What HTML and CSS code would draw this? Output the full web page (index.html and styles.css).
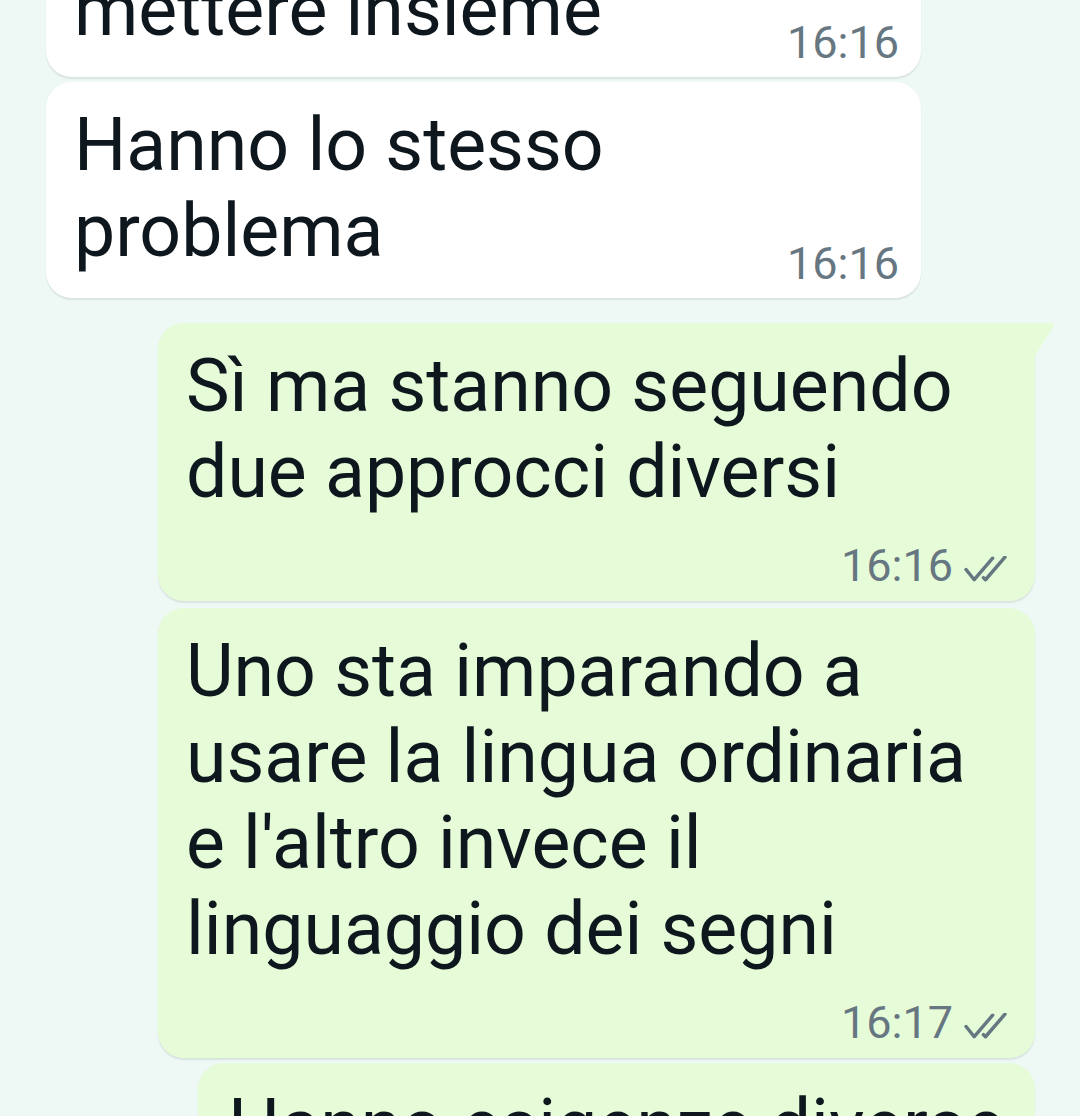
FILE: index.html
```html
<!DOCTYPE html>
<html lang="it">
<head>
<meta charset="utf-8">
<title>Chat</title>
<link rel="stylesheet" href="styles.css">
</head>
<body>
<div class="chat">
  <div class="bubble in b-first">
    <div class="text">mettere insieme</div>
    <div class="meta tight"><span class="time">16:16</span></div>
  </div>
  <div class="bubble in">
    <div class="text">Hanno lo stesso<br>problema</div>
    <div class="meta tight"><span class="time">16:16</span></div>
  </div>
  <div class="bubble out tail group-start">
    <div class="text">Sì ma stanno seguendo<br>due approcci diversi</div>
    <div class="meta"><span class="time">16:16</span>
      <svg class="ticks" viewBox="0 0 42 26" width="43" height="27"><path d="M2 13 L10 23 L28 2"/><path d="M19 21 L21 23 L40 1"/></svg>
    </div>
  </div>
  <div class="bubble out">
    <div class="text">Uno sta imparando a<br>usare la lingua ordinaria<br>e l'altro invece il<br>linguaggio dei segni</div>
    <div class="meta"><span class="time">16:17</span>
      <svg class="ticks" viewBox="0 0 42 26" width="43" height="27"><path d="M2 13 L10 23 L28 2"/><path d="M19 21 L21 23 L40 1"/></svg>
    </div>
  </div>
  <div class="bubble out narrow">
    <div class="text">Hanno esigenze diverse</div>
  </div>
</div>
</body>
</html>
```

FILE: styles.css
```css
html, body {
  margin: 0;
  padding: 0;
  background: #eef9f5;
  height: 1116px;
  overflow: hidden;
}
body {
  font-family: Roboto, "Noto Sans", sans-serif;
  color: #0e171d;
}
.chat {
  display: flex;
  flex-direction: column;
  gap: 7px;
  margin-top: -53px;
}
.bubble {
  position: relative;
  box-sizing: border-box;
  padding: 20px 22px 9px 28px;
  border-radius: 26px;
  box-shadow: 0 1.5px 1.5px rgba(0, 0, 0, 0.09);
}
.in {
  background: #ffffff;
  margin-left: 46px;
  width: 875px;
}
.b-first {
  margin-bottom: -2px;
}
.out {
  background: #e6fcd8;
  margin-left: 158px;
  width: 877px;
  padding-left: 28px;
  padding-right: 28px;
  padding-bottom: 10px;
}
.group-start {
  margin-top: 18px;
}
.tail {
  border-top-right-radius: 0;
}
.tail::after {
  content: "";
  position: absolute;
  top: 0;
  right: -19px;
  width: 20px;
  height: 34px;
  background: #e6fcd8;
  clip-path: polygon(0 0, 88% 0, 100% 4%, 95% 14%, 0 100%);
}
.narrow {
  margin-left: 198px;
  width: 837px;
  padding-left: 30px;
  margin-top: -2px;
}
.text {
  font-size: 73.4px;
  line-height: 86px;
  white-space: nowrap;
}
.meta {
  display: flex;
  justify-content: flex-end;
  align-items: center;
  gap: 11px;
  height: 50px;
  margin-top: 26px;
}
.meta.tight {
  margin-top: -35px;
}
.time {
  font-size: 45px;
  line-height: 50px;
  color: #667781;
}
.ticks {
  fill: none;
  stroke: #667781;
  stroke-width: 3.4;
  stroke-linecap: round;
  stroke-linejoin: round;
  margin-top: 6px;
}
```
